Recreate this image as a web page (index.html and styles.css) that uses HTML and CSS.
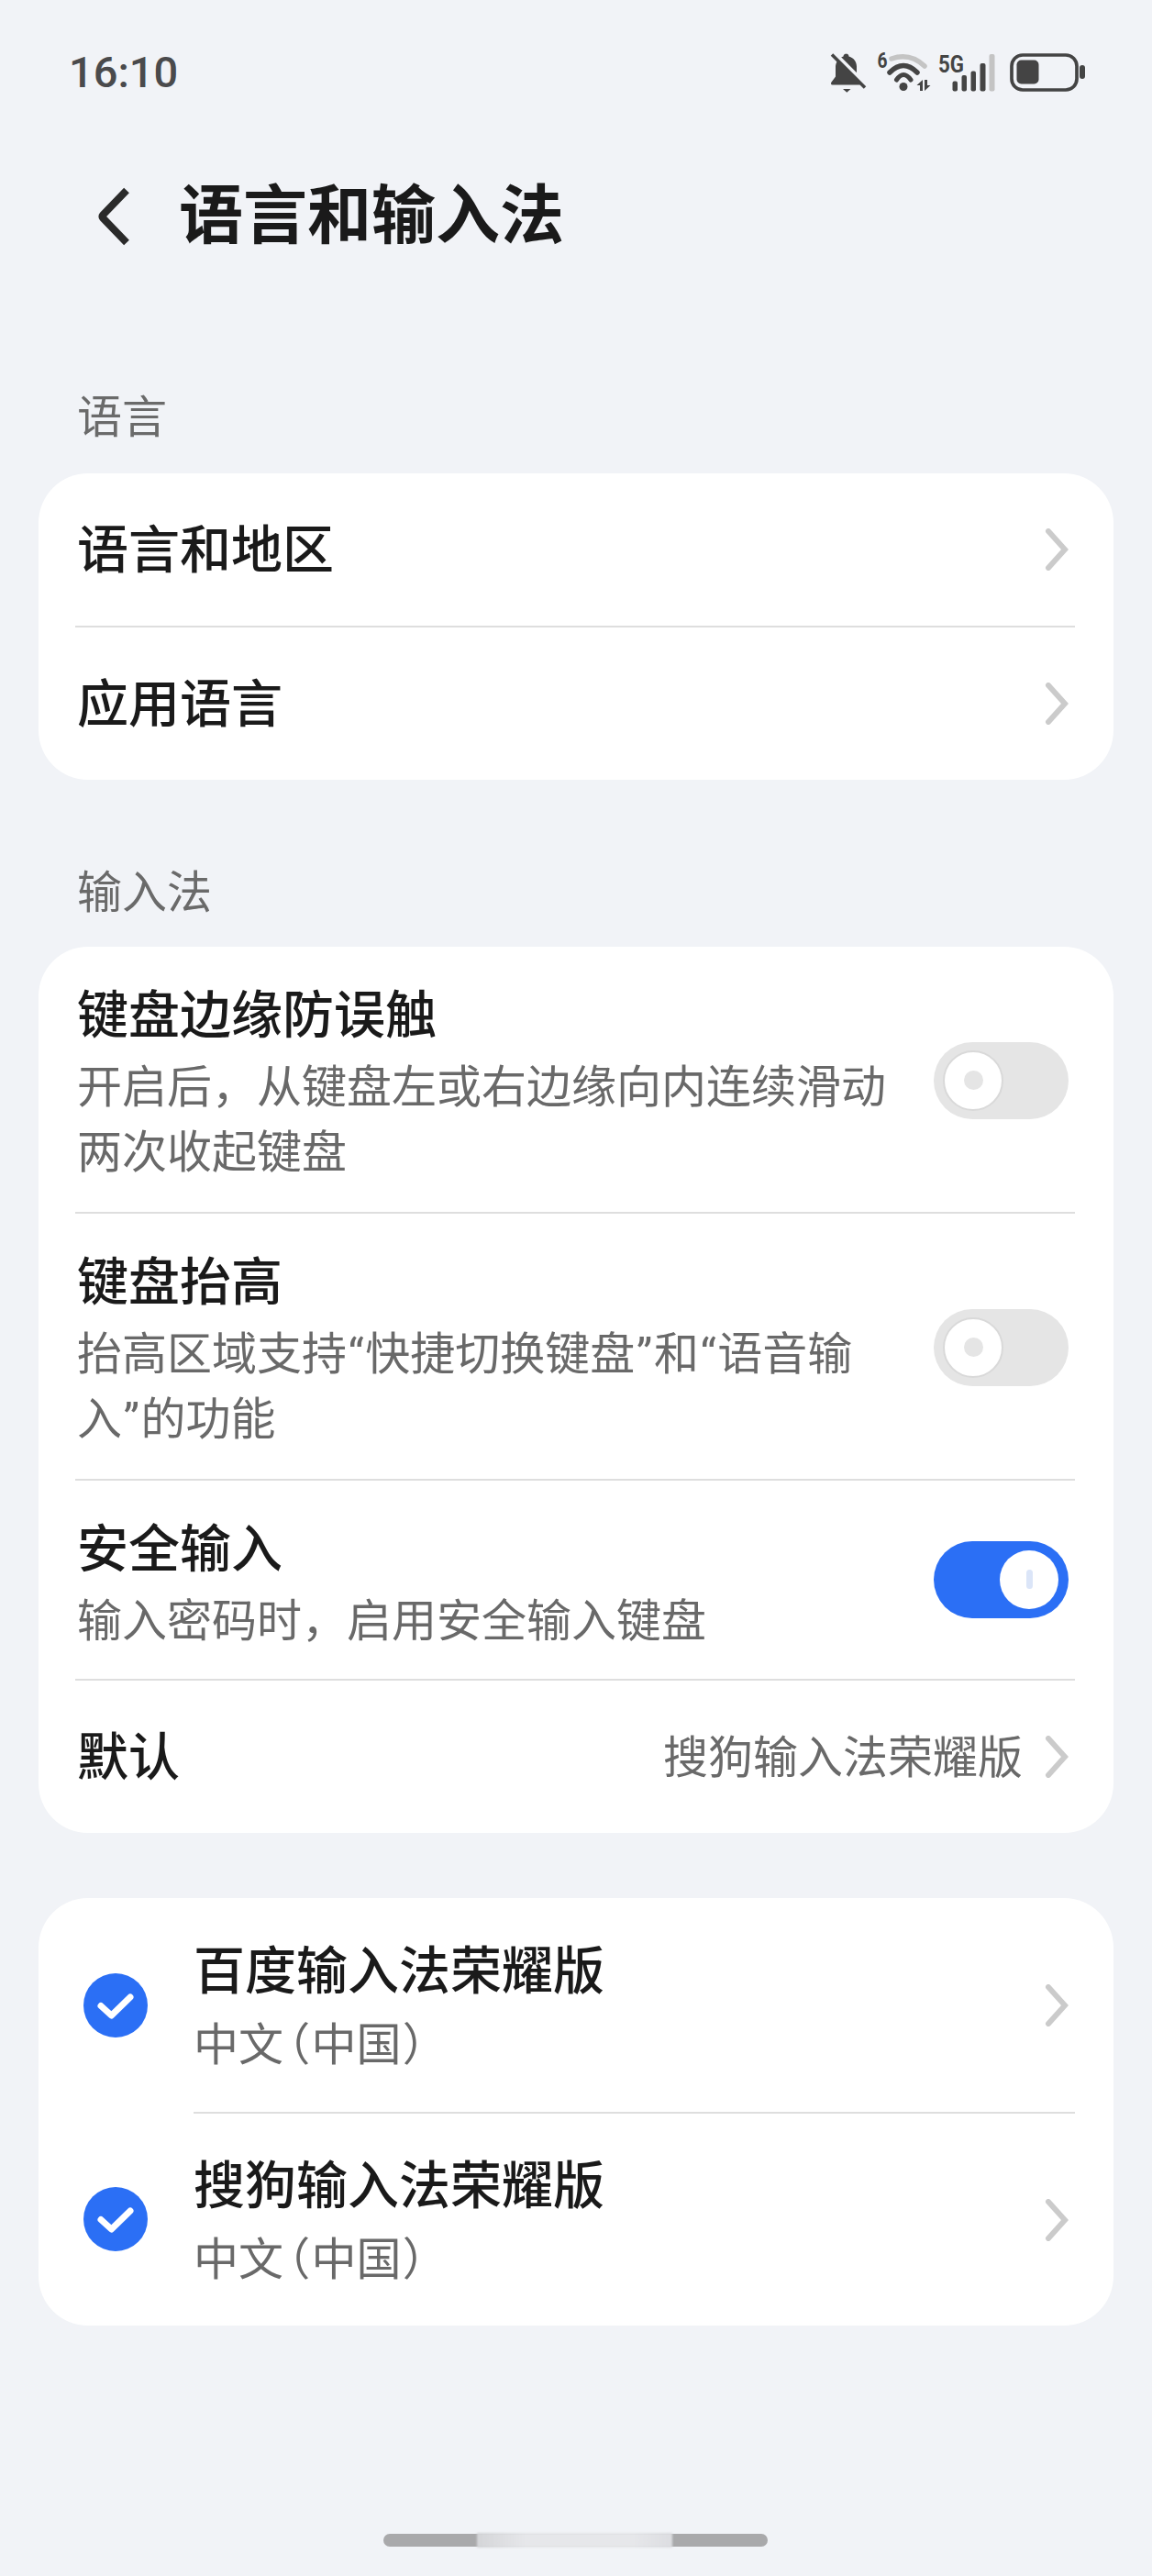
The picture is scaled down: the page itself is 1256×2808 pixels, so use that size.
FILE: index.html
```html
<!DOCTYPE html>
<html lang="zh-CN">
<head>
  <meta charset="UTF-8" />
  <meta name="viewport" content="width=device-width, initial-scale=1.0"/>
  <title>语言和输入法</title>
  <link rel="stylesheet" href="styles.css">
</head>
<body>

  <!-- Status bar -->
  <div class="status-bar">
    <span class="time">16:10</span>
    <div class="status-icons">
      <svg class="ic-bell" width="40" height="46" viewBox="0 0 40 46">
        <path d="M17.500 2.500c2 0 3 1.500 3 3 5.500 1.500 8.500 6 8.500 11v11l4 6c.5 1 .2 3-1 3H2.500c-1.500 0-2-2-1-3l4.500-6V17c0-5 3-9.500 8.500-11.500 0-1.500 1-3 3.500-3z" fill="#444"/>
        <path d="M14 41h8.500l-4.200 3.800z" fill="#444"/>
        <path d="M5 2l34 34" stroke="#f1f3f7" stroke-width="4"/>
        <path d="M2 3.500l36 36" stroke="#444" stroke-width="3.500"/>
      </svg>
      <svg class="ic-wifi" width="65" height="60" viewBox="0 0 65 60">
        <text x="1.500" y="27.500" class="ic-six" textLength="11" lengthAdjust="spacingAndGlyphs">6</text>
        <path d="M17 18Q37 11 53 26" fill="none" stroke="#c4c4c4" stroke-width="5.500" stroke-linecap="round"/>
        <path d="M15 33Q30 18 45 33" fill="none" stroke="#444" stroke-width="5.500" stroke-linecap="round"/>
        <path d="M22.500 41Q30 30 38 41" fill="none" stroke="#444" stroke-width="5" stroke-linecap="round"/>
        <circle cx="30" cy="48.500" r="4.500" fill="#444"/>
        <path d="M51 41v12h-3v-6h-3.500zM53 41h3v6h3.500L53 53z" fill="#444"/>
      </svg>
      <svg class="ic-signal" width="66" height="60" viewBox="0 0 66 60">
        <text x="3" y="32.500" class="ic-five" textLength="28" lengthAdjust="spacingAndGlyphs">5G</text>
        <rect x="18.500" y="42.500" width="5.500" height="11" rx="2" fill="#444"/>
        <rect x="28.500" y="36" width="5.500" height="17.500" rx="2" fill="#444"/>
        <rect x="38.500" y="31.500" width="5.500" height="22" rx="2" fill="#444"/>
        <rect x="48.500" y="23" width="6" height="30.500" rx="2" fill="#444"/>
        <rect x="58.500" y="13" width="6" height="40.500" rx="2" fill="#c4c4c4"/>
      </svg>
      <svg class="ic-battery" width="82" height="42" viewBox="0 0 82 42">
        <rect x="2" y="2" width="71" height="38" rx="12" fill="none" stroke="#444" stroke-width="3.700"/>
        <rect x="7.500" y="7.500" width="24" height="26" rx="5" fill="#444"/>
        <rect x="76" y="13" width="6" height="15" rx="3" fill="#444"/>
      </svg>
    </div>
  </div>

  <!-- Header -->
  <div class="page-header">
    <svg class="back" width="36" height="64" viewBox="0 0 36 64">
      <path d="M33 3.500L7 30.500a2.200 2.200 0 0 0 0 3L33 60.500" fill="none" stroke="#2a2a2a" stroke-width="8"/>
    </svg>
    <h1>语言和输入法</h1>
  </div>

  <div class="section-label first">语言</div>
  <div class="card">
    <div class="row nav-row">
      <span class="row-title">语言和地区</span>
      <svg class="chevron" width="26" height="46" viewBox="0 0 26 46"><path d="M4 3l18 20L4 43" /></svg>
    </div>
    <div class="row nav-row">
      <span class="row-title">应用语言</span>
      <svg class="chevron" width="26" height="46" viewBox="0 0 26 46"><path d="M4 3l18 20L4 43" /></svg>
    </div>
  </div>

  <div class="section-label">输入法</div>
  <div class="card">
    <div class="row switch-row">
      <div class="row-text">
        <div class="row-title">键盘边缘防误触</div>
        <div class="row-sub">开启后，从键盘左或右边缘向内连续滑动<br>两次收起键盘</div>
      </div>
      <div class="toggle"><span class="knob"><span class="knob-mark"></span></span></div>
    </div>
    <div class="row switch-row">
      <div class="row-text">
        <div class="row-title">键盘抬高</div>
        <div class="row-sub">抬高区域支持<span class="q">“</span>快捷切换键盘<span class="q">”</span>和<span class="q">“</span>语音输<br>入<span class="q">”</span>的功能</div>
      </div>
      <div class="toggle"><span class="knob"><span class="knob-mark"></span></span></div>
    </div>
    <div class="row switch-row single">
      <div class="row-text">
        <div class="row-title">安全输入</div>
        <div class="row-sub">输入密码时，启用安全输入键盘</div>
      </div>
      <div class="toggle on"><span class="knob"><span class="knob-mark"></span></span></div>
    </div>
    <div class="row nav-row default-row">
      <span class="row-title">默认</span>
      <span class="row-value">搜狗输入法荣耀版</span>
      <svg class="chevron" width="26" height="46" viewBox="0 0 26 46"><path d="M4 3l18 20L4 43" /></svg>
    </div>
  </div>

  <div class="card keyboards">
    <div class="kb-row">
      <svg class="check" width="70" height="70" viewBox="0 0 70 70">
        <circle cx="35" cy="35" r="35" fill="#2b6ff5"/>
        <path d="M19 35.500L30.500 46 51 26" fill="none" stroke="#fff" stroke-width="7" stroke-linecap="round" stroke-linejoin="round"/>
      </svg>
      <div class="kb-body">
        <div class="kb-text">
          <div class="row-title">百度输入法荣耀版</div>
          <div class="kb-sub">中文<span class="paren">（</span>中国<span class="paren">）</span></div>
        </div>
        <svg class="chevron" width="26" height="46" viewBox="0 0 26 46"><path d="M4 3l18 20L4 43" /></svg>
      </div>
    </div>
    <div class="kb-row">
      <svg class="check" width="70" height="70" viewBox="0 0 70 70">
        <circle cx="35" cy="35" r="35" fill="#2b6ff5"/>
        <path d="M19 35.500L30.500 46 51 26" fill="none" stroke="#fff" stroke-width="7" stroke-linecap="round" stroke-linejoin="round"/>
      </svg>
      <div class="kb-body">
        <div class="kb-text">
          <div class="row-title">搜狗输入法荣耀版</div>
          <div class="kb-sub">中文<span class="paren">（</span>中国<span class="paren">）</span></div>
        </div>
        <svg class="chevron" width="26" height="46" viewBox="0 0 26 46"><path d="M4 3l18 20L4 43" /></svg>
      </div>
    </div>
  </div>

  <div class="home-bar"><div class="home-blur"></div></div>

</body>
</html>
```

FILE: styles.css
```css
html, body {
  margin: 0;
  padding: 0;
}

body {
  height: 2808px;
  overflow: hidden;
  background: #f1f3f7;
  color: #1a1a1a;
  font-family: Roboto, "Noto Sans CJK SC", sans-serif;
}

.status-bar {
  height: 156px;
  box-sizing: border-box;
  padding: 46px 73px 0 75px;
  display: flex;
  justify-content: space-between;
  align-items: flex-start;
}

.time {
  margin-top: 8px;
  font-size: 47px;
  line-height: 50px;
  font-weight: 500;
  color: #4a4a4c;
}

.status-icons {
  display: flex;
  align-items: flex-start;
}

.ic-bell {
  margin: 10px 10px 0 0;
}

.ic-battery {
  margin: 12px 0 0 15px;
}

.ic-six,
.ic-five {
  font-family: Roboto, sans-serif;
  font-weight: 700;
  fill: #444;
}

.ic-six {
  font-size: 23px;
}

.ic-five {
  font-size: 25px;
}

.page-header {
  height: 160px;
  display: flex;
  align-items: center;
  padding-left: 105px;
  box-sizing: border-box;
}

.back {
  margin-right: 54px;
}

h1 {
  margin: 0;
  font-size: 70px;
  line-height: 90px;
  font-weight: 700;
  color: #1a1a1a;
}

.section-label {
  margin: 90px 0 24px 84px;
  height: 68px;
  line-height: 68px;
  font-size: 49px;
  color: #6a6a6a;
}

.section-label.first {
  margin: 106px 0 26px 84px;
}

.card {
  margin: 0 42px;
  background: #fff;
  border-radius: 54px;
}

.row {
  margin: 0 42px 0 40px;
  display: flex;
  align-items: center;
  border-top: 2px solid #dedede;
}

.row:first-child {
  border-top: 0;
}

.nav-row {
  height: 164px;
  justify-content: space-between;
  padding: 2px 7px 0 2px;
}

.nav-row .chevron {
  margin-top: -2px;
}

.row-title {
  font-size: 56px;
  line-height: 70px;
  font-weight: 500;
  color: #1a1a1a;
}

.row-sub,
.row-value,
.kb-sub {
  font-size: 49px;
  line-height: 71px;
  color: #696969;
}

.q {
  margin: 0 1.5px;
}

.chevron {
  flex: none;
  fill: none;
  stroke: #cbcbcb;
  stroke-width: 6;
  stroke-linecap: round;
}

.switch-row {
  padding: 40px 7px 29px 2px;
  justify-content: space-between;
}

.switch-row .toggle {
  margin-top: -9px;
}

.switch-row.single {
  padding-bottom: 27px;
}

.switch-row.single .toggle {
  margin-top: -14px;
}

.row-text {
  width: 890px;
}

.row-sub {
  margin-top: 8px;
}

.default-row .row-title {
  margin-right: auto;
}

.default-row .row-value {
  margin-right: 24px;
}

.toggle {
  flex: none;
  box-sizing: border-box;
  width: 147px;
  height: 84px;
  padding: 10px;
  border-radius: 42px;
  background: #e5e5e5;
  display: flex;
  align-items: center;
}

.knob {
  box-sizing: border-box;
  width: 66px;
  height: 66px;
  border-radius: 50%;
  border: 2px solid #d9d9d9;
  background: #fff;
  display: flex;
  align-items: center;
  justify-content: center;
}

.knob-mark {
  width: 21px;
  height: 21px;
  border-radius: 50%;
  background: #e5e5e5;
}

.toggle.on {
  padding: 10px 11px;
  background: #2b6ff5;
  justify-content: flex-end;
}

.toggle.on .knob {
  border: 0;
  width: 64px;
  height: 64px;
}

.toggle.on .knob-mark {
  width: 7px;
  height: 21px;
  border-radius: 4px;
  background: #dbe5f8;
}

.keyboards {
  margin-top: 71px;
}

.kb-row {
  padding-left: 49px;
  display: flex;
  align-items: center;
  gap: 50px;
}

.check {
  flex: none;
}

.kb-body {
  flex: 1;
  height: 233px;
  margin-right: 42px;
  padding-right: 7px;
  box-sizing: border-box;
  display: flex;
  align-items: center;
  justify-content: space-between;
  border-top: 2px solid #dedede;
}

.kb-row:first-child .kb-body {
  border-top: 0;
}

.kb-text {
  padding-top: 8px;
}

.kb-sub {
  margin-top: 10px;
  font-feature-settings: "palt";
}

.paren {
  margin: 0 3px;
}

.home-bar {
  position: absolute;
  left: 418px;
  top: 2762px;
  width: 419px;
  height: 14px;
  border-radius: 7px;
  background: #a9a9ab;
}

.home-blur {
  position: absolute;
  left: 102px;
  width: 213px;
  top: -1px;
  height: 16px;
  background: linear-gradient(90deg, #d4d5d8, #e6e7ea 25%, #e6e7ea 80%, #dcdde1);
  filter: blur(1px);
}
```
